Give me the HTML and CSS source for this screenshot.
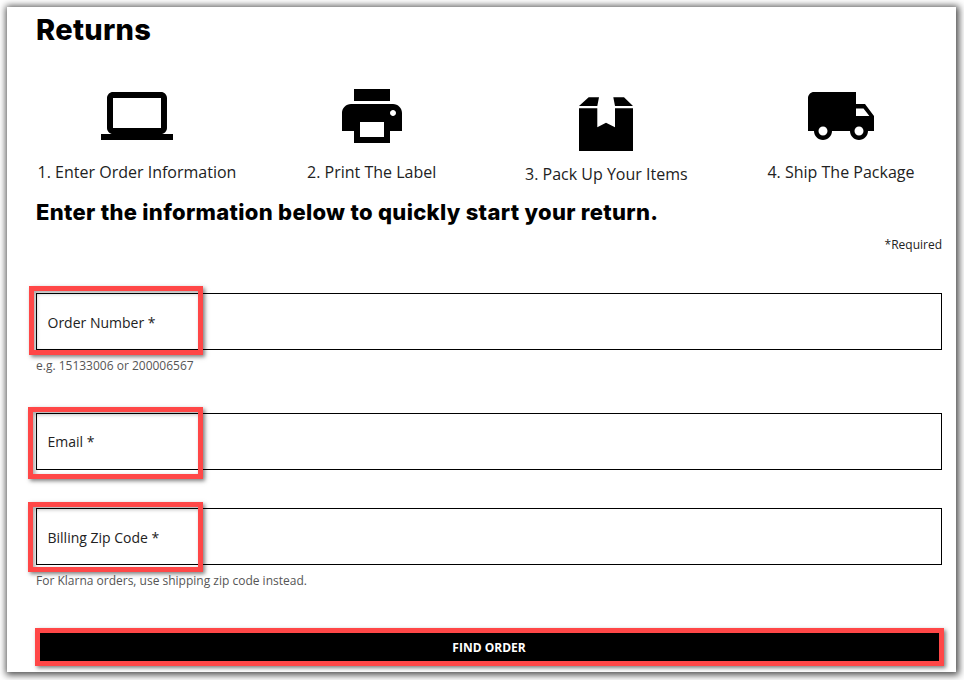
FILE: index.html
```html
<!DOCTYPE html>
<html lang="en">
<head>
<meta charset="utf-8">
<title>Returns</title>
<link rel="stylesheet" href="styles.css">
</head>
<body>
<main class="panel">
  <h1 class="title">Returns</h1>
  <section class="steps">
    <div class="step">
      <svg class="icon" viewBox="0 0 24 24"><path d="M20 18c1.1 0 1.99-.9 1.99-2L22 6c0-1.1-.9-2-2-2H4c-1.1 0-2 .9-2 2v10c0 1.1.9 2 2 2H0v2h24v-2h-4zM4 6h16v10H4V6z"/></svg>
      <p class="step-label">1. Enter Order Information</p>
    </div>
    <div class="step">
      <svg class="icon" viewBox="0 0 24 24"><path d="M19 8H5c-1.66 0-3 1.34-3 3v6h4v4h12v-4h4v-6c0-1.66-1.34-3-3-3zm-3 11H8v-5h8v5zm3-7c-.55 0-1-.45-1-1s.45-1 1-1 1 .45 1 1-.45 1-1 1zm-1-9H6v4h12V3z"/></svg>
      <p class="step-label">2. Print The Label</p>
    </div>
    <div class="step">
      <svg class="icon icon-box" viewBox="0 0 72 74"><path d="M9 26 18.7 17.3H29L27.3 26zM43.3 17.3H54L63 26H45zM9 28.3H27.3V47.3L36 42.7 45 47.3V28.3H63V71H9z"/></svg>
      <p class="step-label">3. Pack Up Your Items</p>
    </div>
    <div class="step">
      <svg class="icon" viewBox="0 0 24 24"><path d="M20 8h-3V4H3c-1.1 0-2 .9-2 2v11h2c0 1.66 1.34 3 3 3s3-1.34 3-3h6c0 1.66 1.34 3 3 3s3-1.34 3-3h2v-5l-3-4zM6 18.5c-.83 0-1.5-.67-1.5-1.5s.67-1.5 1.5-1.5 1.5.67 1.5 1.5-.67 1.5-1.5 1.5zm13.5-9l1.96 2.5H17V9.5h2.5zm-1.5 9c-.83 0-1.5-.67-1.5-1.5s.67-1.5 1.5-1.5 1.5.67 1.5 1.5-.67 1.5-1.5 1.5z"/></svg>
      <p class="step-label">4. Ship The Package</p>
    </div>
  </section>
  <h2 class="subtitle">Enter the information below to quickly start your return.</h2>
  <p class="required">*Required</p>
  <form class="form">
    <div class="field field-order">
      <div class="input-box"><span class="input-label">Order Number *</span></div>
      <span class="mark mark-order"></span>
      <p class="hint">e.g. 15133006 or 200006567</p>
    </div>
    <div class="field field-email">
      <div class="input-box"><span class="input-label">Email *</span></div>
      <span class="mark mark-email"></span>
    </div>
    <div class="field field-zip">
      <div class="input-box"><span class="input-label">Billing Zip Code *</span></div>
      <span class="mark mark-zip"></span>
      <p class="hint">For Klarna orders, use shipping zip code instead.</p>
    </div>
    <div class="field field-submit">
      <button class="submit" type="button">FIND ORDER</button>
      <span class="mark mark-submit"></span>
    </div>
  </form>
</main>
</body>
</html>
```

FILE: styles.css
```css
html, body {
  margin: 0;
  padding: 0;
  background: #fff;
  overflow: hidden;
}

body {
  height: 680px;
  padding: 7px 8px 0 7px;
  box-sizing: border-box;
  font-family: "Open Sans", sans-serif;
  color: #000;
}

.panel {
  background: #fff;
  box-shadow: 1px 1px 7px 2px rgba(0, 0, 0, 0.7);
  padding: 5px 14px 11px 29px;
}

.title {
  margin: 0;
  font-family: Inter, sans-serif;
  font-weight: 800;
  font-size: 29px;
  line-height: 36px;
  letter-spacing: 0.3px;
}

.steps {
  display: flex;
  justify-content: space-between;
  align-items: flex-start;
  margin-top: 32px;
}

.step {
  width: 202px;
  display: flex;
  flex-direction: column;
  align-items: center;
}

.icon {
  display: block;
  width: 72px;
  height: 72px;
  fill: #000;
}

.icon-box {
  height: 74px;
}

.step-label {
  margin: 8px 0 0;
  font-size: 16px;
  line-height: 24px;
  color: #222;
  white-space: nowrap;
}

.subtitle {
  margin: 12px 0 0;
  font-family: Inter, sans-serif;
  font-weight: 800;
  font-size: 22px;
  line-height: 28px;
  letter-spacing: 0.3px;
}

.required {
  margin: 11px 0 0;
  font-size: 12px;
  line-height: 16px;
  text-align: right;
  color: #222;
}

.form {
  margin-top: 40px;
}

.field {
  position: relative;
}

.field-email {
  margin-top: 39px;
}

.field-zip {
  margin-top: 38px;
}

.field-submit {
  margin-top: 44px;
}

.input-box {
  height: 57px;
  box-sizing: border-box;
  border: 1px solid #000;
  display: flex;
  align-items: center;
  padding: 1px 0 0 10.5px;
}

.field-email .input-box {
  padding-top: 0;
  padding-bottom: 1px;
}

.input-label {
  font-size: 14px;
  color: #222;
}

.hint {
  margin: 0;
  padding-top: 8px;
  font-size: 12px;
  line-height: 16px;
  color: #555;
}

.submit {
  display: block;
  width: 100%;
  height: 28px;
  border: 0;
  padding: 0;
  background: #000;
  color: #fff;
  font-family: "Open Sans", sans-serif;
  font-weight: 700;
  font-size: 12px;
}

.mark {
  position: absolute;
  box-sizing: border-box;
  border: 5px solid #ff4747;
  box-shadow: 2px 2px 4px rgba(0, 0, 0, 0.5), inset 2px 2px 4px rgba(0, 0, 0, 0.35);
}

.mark-order {
  left: -7px;
  top: -7px;
  width: 174px;
  height: 69px;
}

.mark-email {
  left: -8px;
  top: -6px;
  width: 175px;
  height: 72px;
}

.mark-zip {
  left: -8px;
  top: -6px;
  width: 175px;
  height: 70px;
}

.mark-submit {
  left: -1px;
  top: -5px;
  width: 909px;
  height: 38px;
}
```
